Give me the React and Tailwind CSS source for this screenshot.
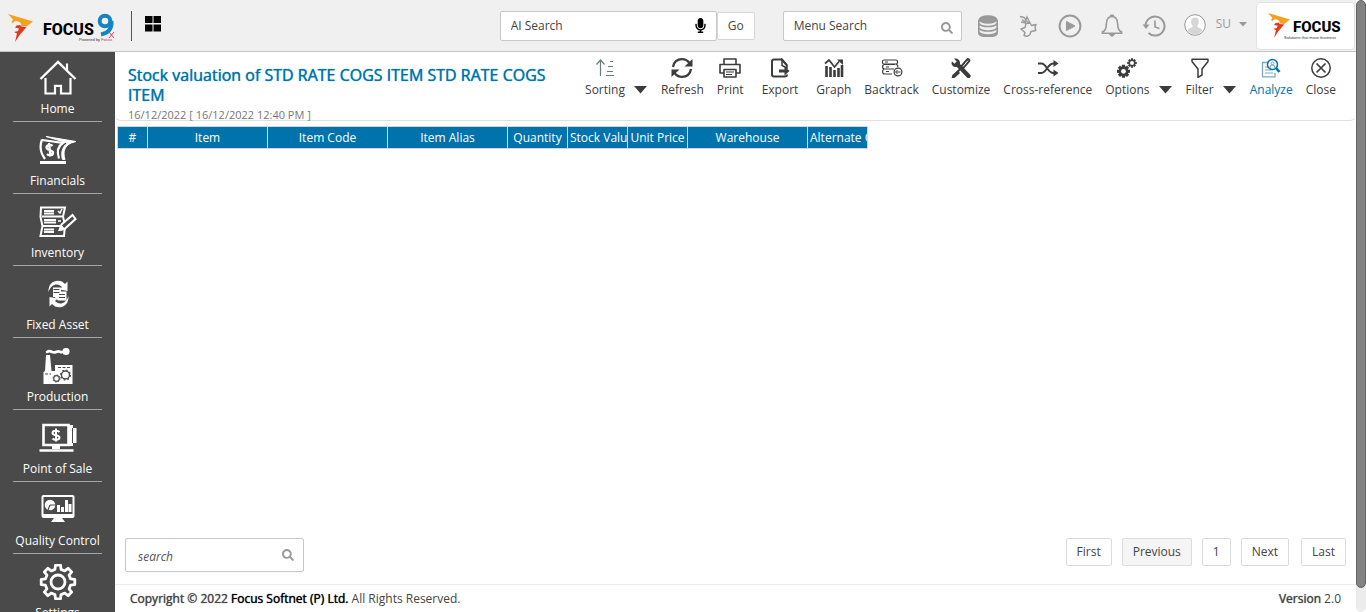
import React from "react";
import { FaMicrophone, FaSearch } from "react-icons/fa";

function gearPath(cx, cy, outer, inner, teeth) {
  const points = [];
  const step = (Math.PI * 2) / teeth;
  for (let i = 0; i < teeth; i++) {
    const a = i * step - Math.PI / 2;
    [
      [-0.3, inner],
      [-0.19, outer],
      [0.19, outer],
      [0.3, inner],
    ].forEach(([offset, r]) => {
      const t = a + offset * step;
      points.push(`${(cx + r * Math.cos(t)).toFixed(2)} ${(cy + r * Math.sin(t)).toFixed(2)}`);
    });
  }
  return `M${points.join("L")}Z`;
}

function Svg({ w, h, children, className = "" }) {
  return (
    <svg
      width={w}
      height={h}
      viewBox={`0 0 ${w} ${h}`}
      fill="none"
      stroke="currentColor"
      strokeWidth="2"
      aria-hidden="true"
      className={`shrink-0 ${className}`}
    >
      {children}
    </svg>
  );
}

/* ---------- brand ---------- */

function BrandShapes() {
  return (
    <>
      <path d="M0 0L25 7.500L18.500 12.500L13.500 12L13 9.500C11 6.500 6 6 5 9.500L3.500 8L5 5.500Z" fill="#f6a01f" />
      <path d="M13.500 12.500L18.500 13.200L12 20.500L7 28L9 19.500L6 18L10 17L11 14.500L7 13.500L8.500 11.500L12 11Z" fill="#e23a22" />
    </>
  );
}

function HeaderLogo() {
  return (
    <a href="#home" aria-label="Focus 9" className="flex items-center text-black">
      <svg width="110" height="32" viewBox="0 0 110 32" aria-hidden="true">
        <g transform="translate(0 4)">
          <BrandShapes />
        </g>
        <text x="35" y="25" fontFamily="Roboto, sans-serif" fontWeight="800" fontSize="16" fill="#000">
          FOCUS
        </text>
        <circle cx="97" cy="11" r="5.300" fill="none" stroke="#1583c4" strokeWidth="4" />
        <path d="M103.500 11C104 18 101 23 93 24.500" fill="none" stroke="#1583c4" strokeWidth="4" />
        <path d="M101 22L106 28M106 22L101 28" stroke="#d8434a" strokeWidth="1" />
        <text x="71" y="31" fontFamily="'Liberation Sans', sans-serif" fontSize="4" fill="#333">
          Powered by <tspan fill="#e0202a">Focus</tspan>
        </text>
      </svg>
    </a>
  );
}

function CompanyLogo() {
  return (
    <div className="flex h-12 w-[99px] shrink-0 items-center justify-center rounded border border-[#e2e2e2] bg-white">
      <svg width="76" height="30" viewBox="0 0 76 30" role="img" aria-label="Focus">
        <g transform="translate(0 2) scale(.88)">
          <BrandShapes />
        </g>
        <text x="25" y="21" fontFamily="Roboto, sans-serif" fontWeight="800" fontSize="15" fill="#000">
          FOCUS
        </text>
        <text x="16" y="28" fontFamily="'Liberation Sans', sans-serif" fontSize="4" fill="#333">
          Solutions that move business
        </text>
      </svg>
    </div>
  );
}

/* ---------- header icons ---------- */

const DatabaseIcon = () => (
  <Svg w={20} h={22} className="text-[#999]">
    <ellipse cx="10" cy="4.500" rx="9.500" ry="4.300" fill="currentColor" stroke="none" />
    <path
      d="M.8 5v13c0 2 4 3.500 9.200 3.500s9.200-1.500 9.200-3.500V5M1 8.500c1.500 2.500 5 3 9 3s7.500-.5 9-3M1 13c1.500 2.500 5 3 9 3s7.500-.5 9-3M1 17c1.500 2.500 5 3 9 3s7.500-.5 9-3"
      strokeWidth="1.600"
    />
  </Svg>
);

const RocketIcon = () => (
  <Svg w={18} h={22} className="text-[#999]">
    <path
      d="M1 1.500l4 1 2 2 1-2.500 3 6M3 4.500l4 3M6 4.500l4 4M2 7l5 1"
      strokeWidth="1.400"
    />
    <path
      d="M7 8.500l4-.5 1.500 2.500 4.500-1-1 3 .8 3-4.800 1-1 3-3 2-3-1 1-3-4-3.500 4-1.500z"
      strokeWidth="1.400"
      strokeLinejoin="round"
    />
  </Svg>
);

const PlayIcon = () => (
  <Svg w={24} h={24} className="text-[#999]">
    <circle cx="12" cy="12" r="10.400" />
    <path d="M8.500 7.500v9L17 12z" fill="currentColor" strokeWidth="1" />
  </Svg>
);

const BellIcon = () => (
  <Svg w={22} h={24} className="text-[#999]">
    <path
      d="M11 2.500C7 2.500 5.500 6 5.300 10c-.2 5-1 6.500-4 8v1.200h19.400V18c-3-1.500-3.800-3-4-8C16.500 6 15 2.500 11 2.500Z"
      strokeWidth="1.600"
      strokeLinejoin="round"
    />
    <path d="M9.500 2.500h3V1h-3zM8.500 20.500h5L11 22.500z" fill="currentColor" strokeWidth="1" />
  </Svg>
);

const HistoryIcon = () => (
  <Svg w={24} h={24} className="text-[#999]">
    <path d="M3.500 12A9.500 9.500 0 1 1 6.500 19" />
    <path d="M13 6.500V13l4.500 1.500" strokeWidth="1.600" />
    <path d="M.5 10.500h7L4 15z" fill="currentColor" stroke="none" />
  </Svg>
);

const AvatarIcon = () => (
  <Svg w={22} h={22}>
    <circle cx="11" cy="11" r="10.300" fill="#fff" stroke="#999" strokeWidth="1" />
    <path
      d="M11 3.500c-3 0-4 2-3.800 4.500.2 2 1 3 1.600 4-.3 2-4 2-5.300 4A9.800 9.800 0 0 0 11 20.800a9.800 9.800 0 0 0 7.500-4.800c-1.300-2-5-2-5.300-4 .6-1 1.400-2 1.600-4 .2-2.500-.8-4.500-3.800-4.500Z"
      fill="#d6d6d6"
      stroke="none"
    />
  </Svg>
);

/* ---------- sidebar icons ---------- */

const HomeIcon = () => (
  <Svg w={38} h={36}>
    <path d="M1.500 19L19 2l17.500 17" strokeWidth="2.400" />
    <path d="M6.500 18v15.500H16v-7.700h6v7.700h9.500V18M28 10V3.500" strokeWidth="2.200" />
  </Svg>
);

const MoneyIcon = () => (
  <Svg w={38} h={36}>
    <path d="M7 4.500L37 9.500l-5 1.500c-6 3-8.500 8-6 16.500h-2.500c-2-7 0-13 5-16.500z" fill="currentColor" strokeWidth="1" />
    <path d="M3 8l21 3c-5 3-6.500 8-4 15.500" strokeWidth="2.200" />
    <path d="M3 7.500C.5 14 1.500 21 6 27" strokeWidth="2.200" />
    <path d="M1 30.500h26" strokeWidth="3" />
    <path d="M13.500 14c-2-2-6-1-6 1.500 0 3 6 2 6.500 5 .3 3-4 3.500-6 1.500M10 11l1.500 13.500" strokeWidth="2.300" />
  </Svg>
);

const LedgerIcon = () => (
  <Svg w={38} h={36}>
    <path d="M2 3.500h24l-2 9 2 9-1 10.500H1.500l2-10-2-9z" />
    <path d="M3 12.500h20M3 22h18" />
    <path d="M5 7h10M5 9.500h10M5 16h12M5 18.500h12M5 25.500h10M5 28h10" strokeWidth="1.800" />
    <path d="M19 7l2 2 2-4M19 17h3" strokeWidth="1.500" />
    <path d="M20.500 26l2-5.500L33.500 11l3 4-11 10z" fill="#4a4a4a" />
    <path d="M20.500 26.500l2-5 3 3.500z" fill="currentColor" strokeWidth="1" />
  </Svg>
);

const FixedAssetIcon = () => (
  <Svg w={38} h={36}>
    <path d="M9.500 16C9 6 17 3 23 5.500l3 2.500 2.500-2.500V15l-8-1.500 2.500-2.500C19 6.500 12 8 9.500 16Z" fill="currentColor" stroke="none" />
    <path d="M29.500 20c.5 10-7.500 13-13.500 10.500L13 28l-2.500 2.500V21l8 1.500L16 25c4 4.500 11 3 13.500-5Z" fill="currentColor" stroke="none" />
    <path d="M14 11.500h8v4h5.500v9H19l-3.500-3.500H14z" fill="currentColor" stroke="none" />
    <path d="M14.500 13.500h6M14.500 16.500h6M20 18.500h6M20 21.500h6" stroke="#4a4a4a" strokeWidth="1" />
  </Svg>
);

const FactoryIcon = () => (
  <Svg w={38} h={36}>
    <path d="M7 7h4l1.500 16H16v-6h17.500v19h-29V24L6 23z" fill="currentColor" stroke="none" />
    <path d="M8 4c4-3 5 2 9 0s4 1 6 0" strokeWidth="2.600" strokeLinecap="round" />
    <circle cx="27" cy="3.500" r="3.600" fill="currentColor" stroke="none" />
    <g stroke="#4a4a4a">
      <path d="M19 19.500h12M6 26h6" strokeWidth="1.200" strokeDasharray="3 1.500" />
      <circle cx="17.500" cy="30.500" r="2.800" strokeWidth="1.200" />
      <circle cx="17.500" cy="30.500" r="3.600" strokeWidth="1" strokeDasharray="1.200 1.600" />
      <circle cx="26.500" cy="27" r="4" strokeWidth="1.400" />
      <circle cx="26.500" cy="27" r="5" strokeWidth="1.200" strokeDasharray="1.800 2.100" />
    </g>
  </Svg>
);

const PosIcon = () => (
  <Svg w={38} h={36}>
    <path d="M4.500 5h25v20h-25z" strokeWidth="2.600" />
    <path d="M30 5h4v3h3.500v15H34v3h-4z" fill="currentColor" stroke="none" />
    <path d="M33.500 8v15" stroke="#4a4a4a" strokeWidth="1" />
    <path d="M13 26h8v3h-8z" fill="currentColor" stroke="none" />
    <path d="M.5 30.500h34" strokeWidth="2.600" />
    <path d="M20.500 12c-2-2-7-1.500-7 1 0 3 7 1.500 7 4.500 0 2.500-5 3-7 1M17 8.500v13" strokeWidth="2" />
  </Svg>
);

const QualityIcon = () => (
  <Svg w={38} h={36}>
    <rect x="3.500" y="4" width="31" height="21" rx="1" />
    <path d="M3 22h32v3H3zM15 26h8l3 4H12z" fill="currentColor" stroke="none" />
    <circle cx="11" cy="13" r="5.300" fill="currentColor" stroke="none" />
    <path d="M11 13h6M11 13l-2 5" stroke="#4a4a4a" strokeWidth="1.200" />
    <path d="M19.500 20v-7M23.500 20v-5M27.500 20V8M31 20v-8" strokeWidth="3" />
  </Svg>
);

const SettingsIcon = () => (
  <Svg w={38} h={36}>
    <path d={gearPath(19, 18, 17, 13, 8)} strokeWidth="2.800" strokeLinejoin="round" />
    <circle cx="19" cy="18" r="7" strokeWidth="2.800" />
  </Svg>
);

/* ---------- toolbar icons ---------- */

const SortIcon = () => (
  <Svg w={20} h={20}>
    <path d="M5.500 18V2M1.500 6.500l4-4.500 4 4.500" strokeWidth="1.200" />
    <path d="M15 3.500h3M13 8.500h5M12 13.500h6M11 17.500h8" strokeWidth="1" />
  </Svg>
);

const RefreshIcon = () => (
  <Svg w={22} h={20}>
    <path d="M2 9C3 3.500 6.500 1.200 11 1.200c3 0 5.500 1 7.500 4M20 11c-1 5.500-4.500 7.800-9 7.800-3 0-5.500-1-7.500-4" strokeWidth="2.300" />
    <path d="M21.500 1v7.500h-8zM.5 19v-7.500h8z" fill="currentColor" stroke="none" />
  </Svg>
);

const PrintIcon = () => (
  <Svg w={22} h={20}>
    <path d="M5 6V1h12v5M5 15H1V6.500h20V15h-4M5 11.500h12V19H5z" strokeWidth="1.600" strokeLinejoin="round" />
    <path d="M7 14h8M7 16.500h6" strokeWidth="1.200" />
  </Svg>
);

const ExportIcon = () => (
  <Svg w={20} h={20}>
    <path d="M17 7.500L12 1.500H4C2.500 1.500 2 2 2 3.500v13c0 1.500.5 2 2 2h11c1.500 0 2-.5 2-2" />
    <path d="M17 10V7.500L12 1.500v6z" strokeWidth="1.500" />
    <path d="M9 11.500h5.500V8.500l5 4.500-5 4.500v-3H9z" fill="currentColor" stroke="none" />
  </Svg>
);

const GraphIcon = () => (
  <Svg w={20} h={20}>
    <path d="M2.500 19V8M6.500 19V9M10.500 19v-7M14.500 19v-9M18 19V7" strokeWidth="2.600" />
    <path d="M1 5.500l4-3.500 5.500 7L15 3.500" strokeWidth="1.700" />
    <path d="M13 1.500h6V7z" fill="currentColor" stroke="none" />
  </Svg>
);

const BacktrackIcon = () => (
  <Svg w={22} h={20}>
    <rect x="1.500" y="2" width="15" height="4" rx="1.500" strokeWidth="1.200" />
    <path d="M14 6.500H3.500C1 6.500 1 11 3.500 11H13M12 11H3.500C1 11 1 16 3.500 16H11M15 6.500c2 0 2 1.500 1.500 2.500M4 4h3M5 9h3M5 13.500h3" strokeWidth="1.200" />
    <circle cx="17" cy="14" r="3.900" strokeWidth="1.200" />
    <path d="M19.500 14H15M16.500 12l-2 2 2 2" strokeWidth="1" />
  </Svg>
);

const ToolsIcon = () => (
  <Svg w={20} h={20}>
    <path d="M6 6l11.500 12" strokeWidth="4.200" strokeLinecap="round" />
    <path d="M1 3.500L4 6l2-2-3-3.500C6 0 9.500 2 9 5.500 8.500 9 4 10.500 1.500 7.500.3 6 .3 5 1 3.500Z" fill="currentColor" stroke="none" />
    <path d="M11 9.500l6-7" strokeWidth="4.600" strokeLinecap="round" />
    <path d="M12 8.500l5-6" stroke="#fff" strokeWidth="1" />
    <path d="M11 9L5 15.500" strokeWidth="2" />
    <path d="M6.500 13.500L2 17.500l-.5 2 2-.5 4.500-4z" fill="currentColor" strokeWidth="1.500" />
  </Svg>
);

const ShuffleIcon = () => (
  <Svg w={22} h={20}>
    <path d="M1 5.500h3.500c5 0 6 9.500 12 9.500H18M1 15h3.500c5 0 6-9.500 12-9.500H18" strokeWidth="1.900" />
    <path d="M16.500 2l5 3.500-5 3.500zM16.500 11.500l5 3.500-5 3.500z" fill="currentColor" stroke="none" />
  </Svg>
);

const CogsIcon = () => (
  <Svg w={20} h={20}>
    <path d={gearPath(6.5, 13.3, 5.8, 4.2, 8)} strokeWidth="1.500" fill="currentColor" />
    <path d={gearPath(15, 5, 4.4, 3.2, 8)} strokeWidth="1" fill="currentColor" />
    <circle cx="6.500" cy="13.300" r="2.400" fill="#fff" stroke="none" />
    <circle cx="15" cy="5" r="2" fill="#fff" stroke="none" />
  </Svg>
);

const FunnelIcon = () => (
  <Svg w={20} h={20}>
    <path d="M2 1.200h16v2.300L12 11v6l-4 2.300V11L2 3.500z" strokeWidth="1.500" strokeLinejoin="round" />
  </Svg>
);

const AnalyzeIcon = () => (
  <Svg w={20} h={20}>
    <path d="M7 4.500H1.500v14.300H14V15" stroke="#7aa7c9" strokeWidth="1.300" />
    <path d="M4 9h3M4 12h6M4 15h8" stroke="#7aa7c9" strokeWidth="1.200" />
    <circle cx="11.500" cy="6.500" r="5" strokeWidth="1.500" />
    <path d="M9 10c0-4 5-4 5 0" stroke="#7aa7c9" strokeWidth="1.200" />
    <circle cx="11.500" cy="5.300" r="1.400" stroke="#7aa7c9" strokeWidth="1" />
    <path d="M15 10l3.500 4" strokeWidth="2.600" />
  </Svg>
);

const CloseIcon = () => (
  <Svg w={20} h={20}>
    <circle cx="10" cy="10" r="9.200" strokeWidth="1.500" />
    <path d="M5.500 5.500l9 9M14.500 5.500l-9 9" strokeWidth="1.700" />
  </Svg>
);

/* ---------- data ---------- */

const modules = [
  ["Home", HomeIcon],
  ["Financials", MoneyIcon],
  ["Inventory", LedgerIcon],
  ["Fixed Asset", FixedAssetIcon],
  ["Production", FactoryIcon],
  ["Point of Sale", PosIcon],
  ["Quality Control", QualityIcon],
  ["Settings", SettingsIcon],
];

const tools = [
  { label: "Sorting", Icon: SortIcon, menu: true, soft: true },
  { label: "Refresh", Icon: RefreshIcon },
  { label: "Print", Icon: PrintIcon },
  { label: "Export", Icon: ExportIcon, wide: true },
  { label: "Graph", Icon: GraphIcon },
  { label: "Backtrack", Icon: BacktrackIcon },
  { label: "Customize", Icon: ToolsIcon },
  { label: "Cross-reference", Icon: ShuffleIcon },
  { label: "Options", Icon: CogsIcon, menu: true },
  { label: "Filter", Icon: FunnelIcon, menu: true },
  { label: "Analyze", Icon: AnalyzeIcon, active: true },
  { label: "Close", Icon: CloseIcon },
];

const columns = [
  ["#", "w-[30px]"],
  ["Item", "w-[120px]"],
  ["Item Code", "w-[120px]"],
  ["Item Alias", "w-[120px]"],
  ["Quantity", "w-[60px]"],
  ["Stock Value", "w-[60px]"],
  ["Unit Price", "w-[60px]"],
  ["Warehouse", "w-[120px]"],
  ["Alternate Quantity", "w-[60px]"],
];

/* ---------- sections ---------- */

function Header() {
  return (
    <header className="flex h-[52px] shrink-0 items-center border-b border-[#c4c4c4] bg-[#f0f0f0] pl-2">
      <HeaderLogo />
      <span className="ml-[13px] h-[30px] w-px bg-[#555]" />
      <button type="button" aria-label="All modules" className="mb-1 ml-[13px]">
        <Svg w={16} h={16} className="text-black">
          <path d="M0 0h7.500v7H0zM8.500 0H16v7H8.500zM0 8.500h7.500v7H0zM8.500 8.500H16v7H8.500z" fill="currentColor" stroke="none" />
        </Svg>
      </button>

      <div className="ml-auto flex items-center">
        <label className="flex h-[30px] w-[217px] items-center rounded-xs border border-[#c8c8c8] bg-white pr-2 pl-2.5">
          <input aria-label="AI Search" placeholder="AI Search" className="min-w-0 flex-1 bg-transparent outline-none placeholder:text-[#444]" />
          <FaMicrophone className="size-[15px] text-black" aria-hidden="true" />
        </label>
        <button type="button" className="h-7 w-[38px] rounded-xs border border-[#d6d6d6] bg-white">
          Go
        </button>
        <label className="ml-7 flex h-[30px] w-[179px] items-center rounded-xs border border-[#c8c8c8] bg-white pr-2 pl-2.5">
          <input aria-label="Menu Search" placeholder="Menu Search" className="min-w-0 flex-1 bg-transparent outline-none placeholder:text-[#444]" />
          <FaSearch className="mt-1 size-3 text-[#999]" aria-hidden="true" />
        </label>
        <nav aria-label="Shortcuts" className="ml-4 flex items-center gap-[19px]">
          <button type="button" aria-label="Database"><DatabaseIcon /></button>
          <button type="button" aria-label="Launch" className="mx-0.5"><RocketIcon /></button>
          <button type="button" aria-label="Play"><PlayIcon /></button>
          <button type="button" aria-label="Notifications"><BellIcon /></button>
          <button type="button" aria-label="History"><HistoryIcon /></button>
        </nav>
        <button type="button" className="mb-0.5 ml-[18px] flex items-center text-[#999]">
          <AvatarIcon />
          <span className="mb-0.5 ml-2.5">SU</span>
          <Svg w={8} h={5} className="ml-2">
            <path d="M0 0h8L4 4.500z" fill="currentColor" stroke="none" />
          </Svg>
        </button>
        <div className="ml-[9px] pr-px">
          <CompanyLogo />
        </div>
      </div>
    </header>
  );
}

function Sidebar() {
  return (
    <nav aria-label="Modules" className="w-[115px] shrink-0 overflow-hidden bg-[#4a4a4a] px-[13px] text-white">
      {modules.map(([label, Icon]) => (
        <a
          key={label}
          href={`#${label}`}
          className="flex flex-col items-center border-b border-[#a5a5a5] pt-2.5 first:pt-2"
        >
          <Icon />
          <span className="h-[25px] leading-[26px] whitespace-nowrap">{label}</span>
        </a>
      ))}
    </nav>
  );
}

function Toolbar() {
  return (
    <div className="flex shrink-0 items-start gap-[13px] pt-1.5 pr-5">
      {tools.map(({ label, Icon, menu, wide, active, soft }) => (
        <button
          key={label}
          type="button"
          className={`flex items-end gap-[9px] ${wide ? "px-[5px]" : ""} ${menu ? "pr-px" : ""} ${active ? "text-[#0073ad]" : "text-[#3c3c3c]"}`}
        >
          <span className="flex flex-col items-center">
            <span className={soft ? "text-[#6a7a80]" : ""}>
              <Icon />
            </span>
            <span className="leading-6">{label}</span>
          </span>
          {menu && (
            <Svg w={13} h={8} className="mb-2">
              <path d="M0 0h13L6.500 7.500z" fill="currentColor" stroke="none" />
            </Svg>
          )}
        </button>
      ))}
    </div>
  );
}

function ReportTable() {
  return (
    <table className="mt-[5px] ml-0.5 w-[750px] table-fixed border-collapse">
      <thead>
        <tr className="h-[22px]">
          {columns.map(([label, width]) => (
            <th
              key={label}
              scope="col"
              className={`${width} overflow-hidden border border-[#d5d5d5] bg-[#0073ad] px-0.5 py-0 font-normal text-clip whitespace-nowrap text-white`}
            >
              {label}
            </th>
          ))}
        </tr>
      </thead>
    </table>
  );
}

function PageButton({ children, className = "" }) {
  return (
    <button type="button" className={`h-7 rounded-xs border border-[#dcdcdc] px-2.5 ${className}`}>
      {children}
    </button>
  );
}

function Pager() {
  return (
    <nav aria-label="Pages" className="flex items-start gap-2.5">
      <PageButton>First</PageButton>
      <PageButton className="bg-[#f5f5f5]">Previous</PageButton>
      <PageButton>1</PageButton>
      <PageButton>Next</PageButton>
      <PageButton className="ml-0.5">Last</PageButton>
    </nav>
  );
}

export default function App() {
  return (
    <div className="flex h-screen overflow-hidden bg-white font-['Open_Sans',sans-serif] text-xs text-[#444]">
      <div className="flex min-w-0 flex-1 flex-col">
        <Header />
        <div className="flex min-h-0 flex-1">
          <Sidebar />
          <div className="flex min-w-0 flex-1 flex-col">
            <section className="flex items-start justify-between rounded-b-md border-b border-[#e0e0e0]">
              <div className="min-w-0 flex-1 pt-[13px] pl-[13px]">
                <h1 className="max-w-[430px] text-base leading-5 font-normal text-[#0073ad] [text-shadow:0_0_1px_#0073ad]">
                  Stock valuation of STD RATE COGS ITEM STD RATE COGS ITEM
                </h1>
                <p className="pt-1 text-[11px] leading-[11px] text-[#777]">16/12/2022 [ 16/12/2022 12:40 PM ]</p>
              </div>
              <Toolbar />
            </section>
            <main className="flex-1">
              <ReportTable />
            </main>
            <div className="flex items-start justify-between pr-2.5 pb-3 pl-2.5">
              <label className="flex h-[34px] w-[179px] items-center rounded-xs border border-[#c8c8c8] pr-[9px] pl-3">
                <input aria-label="search" placeholder="search" className="min-w-0 flex-1 pt-1 italic outline-none placeholder:text-[#555]" />
                <FaSearch className="size-3 text-[#999]" aria-hidden="true" />
              </label>
              <Pager />
            </div>
            <footer className="flex h-7 shrink-0 items-center justify-between border-t border-[#ececec] pr-[15px] pl-[15px]">
              <p>
                <span className="[text-shadow:0_0_1px_#444]">Copyright © 2022</span>{" "}
                <a href="#focus" className="text-black [text-shadow:0_0_1px_#000]">Focus Softnet (P) Ltd.</a> All Rights Reserved.
              </p>
              <p>
                <span className="[text-shadow:0_0_1px_#444]">Version</span> 2.0
              </p>
            </footer>
          </div>
        </div>
      </div>
      <div aria-hidden="true" className="flex w-2.5 shrink-0 flex-col rounded-md bg-[#ececec]">
        <div className="h-[96%] rounded-md border border-[#666] bg-[#828282]" />
      </div>
    </div>
  );
}
